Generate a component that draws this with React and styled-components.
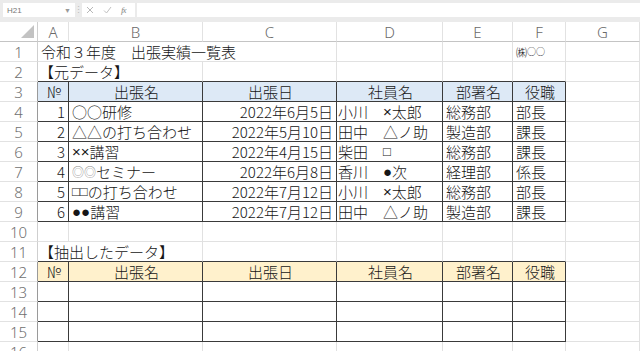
import React from 'react';
import styled, { createGlobalStyle } from 'styled-components';

const GlobalStyle = createGlobalStyle`
  html, body { margin: 0; padding: 0; background: #fff; overflow: hidden; }
  body { font-family: "Noto Sans CJK JP", sans-serif; }
  * { box-sizing: border-box; }
`;

const Window = styled.div`
  width: 640px;
  height: 351px;
  overflow: hidden;
  display: flex;
  flex-direction: column;
  background: #fff;
`;

const FormulaBar = styled.div`
  flex: none;
  height: 22px;
  background: #ebebeb;
  display: flex;
  align-items: flex-start;
  padding: 3px 0 0 3px;
`;

const NameBox = styled.div`
  width: 72px;
  height: 14px;
  background: #fff;
  display: flex;
  align-items: center;
  justify-content: space-between;
  padding: 0 4px 0 4px;
  font: 8px "Liberation Sans", sans-serif;
  color: #777;
`;

const Caret = styled.span`
  font-size: 7px;
  color: #999;
`;

const Grip = styled.div`
  width: 7px;
  height: 14px;
  display: flex;
  align-items: center;
  justify-content: center;
  color: #bbb;
  font: 9px "Liberation Sans", sans-serif;
`;

const ToolBox = styled.div`
  width: 53px;
  height: 14px;
  background: #fff;
  display: flex;
  align-items: center;
  gap: 9px;
  padding-left: 4px;
  color: #b5b5b5;
`;

const Fx = styled.span`
  font: italic 9px "Liberation Serif", serif;
  color: #888;
  letter-spacing: -1px;
`;

const FormulaInput = styled.div`
  flex: 1;
  height: 14px;
  margin-left: 2px;
  background: #fff;
`;

const Sheet = styled.div`
  display: grid;
  grid-template-columns: 38px 31px 134px 134px 106px 70px 53px 1fr;
  grid-auto-rows: 20px;
`;

const Corner = styled.div`
  position: relative;
  background: #fff;
  border-right: 1px solid #cfcfcf;
  border-bottom: 1px solid #c4c4c4;
  &::after {
    content: '';
    position: absolute;
    right: 3px;
    bottom: 3px;
    width: 0;
    height: 0;
    border-left: 13px solid transparent;
    border-bottom: 13px solid #c3c3c3;
  }
`;

const ColHead = styled.div`
  background: #fff;
  border-right: 1px solid #e2e2e2;
  border-bottom: 1px solid #c4c4c4;
  display: flex;
  align-items: center;
  justify-content: center;
  font: 300 15px "Noto Sans", sans-serif;
  color: #6a6a6a;
`;

const RowHead = styled.div`
  background: #fff;
  border-right: 1px solid ${p => (p.$dark ? '#9a9a9a' : '#cfcfcf')};
  border-bottom: 1px solid #e2e2e2;
  display: flex;
  align-items: center;
  justify-content: center;
  font: 300 15px "Noto Sans", sans-serif;
  color: #707070;
`;

const Cell = styled.div`
  grid-column: span ${p => p.$span || 1};
  background: ${p => p.$fill || '#fff'};
  border-right: 1px solid ${p => (p.$rd ? '#3a3a3a' : '#e1e1e1')};
  border-bottom: 1px solid ${p => (p.$bd ? '#3a3a3a' : '#e1e1e1')};
  display: flex;
  align-items: center;
  justify-content: ${p =>
    p.$align === 'right' ? 'flex-end' : p.$align === 'center' ? 'center' : 'flex-start'};
  padding: 1px ${p => (p.$align === 'right' ? 3 : 1)}px 0 ${p => p.$pl ?? 3}px;
  font-family: "Noto Sans CJK JP", sans-serif;
  font-weight: 300;
  font-size: ${p => p.$size || 15}px;
  line-height: 18px;
  color: #161616;
  white-space: nowrap;
  overflow: hidden;
`;

const Sym = styled.span`
  font-family: ${p => (p.$cjk ? '"Noto Sans CJK JP"' : '"Liberation Sans"')}, sans-serif;
  font-size: ${p => p.$size || 15}px;
  color: ${p => p.$color || 'inherit'};
`;

const COLS = ['A', 'B', 'C', 'D', 'E', 'F', 'G'];
const HEADERS = ['№', '出張名', '出張日', '社員名', '部署名', '役職'];
const BLUE = '#dde9f6';
const GOLD = '#fff1cc';

const RECORDS = [
  ['1', <>○○研修</>, '2022年6月5日', <>小川　<Sym>×</Sym>太郎</>, '総務部', '部長'],
  ['2', '△△の打ち合わせ', '2022年5月10日', '田中　△ノ助', '製造部', '課長'],
  ['3', <><Sym>××</Sym>講習</>, '2022年4月15日', <>柴田　<Sym $size={13}>□</Sym></>, '総務部', '課長'],
  ['4', <><Sym $cjk $size={12} $color="#8a8a8a">◎◎</Sym>セミナー</>, '2022年6月8日', <>香川　<Sym>●</Sym>次</>, '経理部', '係長'],
  ['5', <><Sym $size={13}>□□</Sym>の打ち合わせ</>, '2022年7月12日', <>小川　<Sym>×</Sym>太郎</>, '総務部', '部長'],
  ['6', <><Sym>●●</Sym>講習</>, '2022年7月12日', '田中　△ノ助', '製造部', '課長'],
];

const DATA_ALIGN = ['right', 'left', 'right', 'left', 'left', 'left'];

const inTable = (r, c) =>
  c >= 1 && c <= 6 && ((r >= 3 && r <= 9) || (r >= 12 && r <= 15));

function buildCells() {
  const map = {};
  map[1] = {
    1: { content: '令和３年度　出張実績一覧表', span: 3 },
    6: { content: <><span>㈱</span><Sym $cjk $size={9}>○○</Sym></>, size: 11 },
  };
  map[2] = { 1: { content: '【元データ】', span: 2, pl: 1 } };
  map[11] = { 1: { content: '【抽出したデータ】', span: 2, pl: 1 } };
  [3, 12].forEach(r => {
    map[r] = {};
    HEADERS.forEach((h, i) => {
      map[r][i + 1] = { content: h, align: 'center', fill: r === 3 ? BLUE : GOLD };
    });
  });
  RECORDS.forEach((rec, k) => {
    const r = 4 + k;
    map[r] = {};
    rec.forEach((v, i) => {
      map[r][i + 1] = { content: v, align: DATA_ALIGN[i], pl: i === 3 ? 1 : 3 };
    });
  });
  return map;
}

const CELLS = buildCells();

export default function App() {
  const rows = [];
  for (let r = 1; r <= 17; r++) {
    rows.push(
      <RowHead key={`h${r}`} $dark={inTable(r, 1)}>
        {r}
      </RowHead>
    );
    let c = 1;
    while (c <= 7) {
      const def = (CELLS[r] && CELLS[r][c]) || {};
      const span = def.span || 1;
      const last = c + span - 1;
      rows.push(
        <Cell
          key={`${r}-${c}`}
          $span={span}
          $align={def.align}
          $fill={def.fill}
          $pl={def.pl}
          $size={def.size}
          $rd={inTable(r, last) || inTable(r, last + 1)}
          $bd={inTable(r, c) || inTable(r + 1, c)}
        >
          {def.content}
        </Cell>
      );
      c += span;
    }
  }

  return (
    <Window>
      <GlobalStyle />
      <FormulaBar>
        <NameBox>
          <span>H21</span>
          <Caret>▼</Caret>
        </NameBox>
        <Grip>⋮</Grip>
        <ToolBox>
          <svg width="8" height="8" viewBox="0 0 8 8">
            <path d="M1 1 L7 7 M7 1 L1 7" stroke="#b8b8b8" strokeWidth="1" fill="none" />
          </svg>
          <svg width="9" height="8" viewBox="0 0 9 8">
            <path d="M1 4.5 L3.5 7 L8 1" stroke="#c0c0c0" strokeWidth="1" fill="none" />
          </svg>
          <Fx>fx</Fx>
        </ToolBox>
        <FormulaInput />
      </FormulaBar>
      <Sheet>
        <Corner />
        {COLS.map(l => (
          <ColHead key={l}>{l}</ColHead>
        ))}
        {rows}
      </Sheet>
    </Window>
  );
}
